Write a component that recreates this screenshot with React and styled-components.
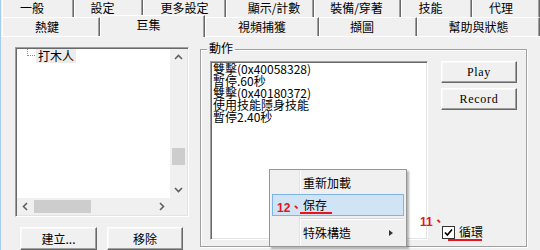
import React from "react";
import styled, { createGlobalStyle } from "styled-components";

const GlobalStyle = createGlobalStyle`
	html, body {
		margin: 0;
		padding: 0;
		background: #f0f0f0;
	}
	body {
		width: 540px;
		height: 250px;
		overflow: hidden;
		font-family: "Noto Sans CJK TC", "Noto Sans CJK SC", sans-serif;
		color: #000;
	}
`;

const tabsTop = [
	{ label: "一般", w: 72, nudge: -6 },
	{ label: "設定", w: 69, nudge: -6 },
	{ label: "更多設定", w: 83, nudge: 0 },
	{ label: "顯示/計數", w: 88, nudge: 4 },
	{ label: "裝備/穿著", w: 87, nudge: -1 },
	{ label: "技能", w: 71, nudge: -6 },
	{ label: "代理", w: 68, nudge: -5 },
];

const tabsBottom = [
	{ label: "熱鍵", w: 98, nudge: -4 },
	{ label: "巨集", w: 105, nudge: -4, active: true },
	{ label: "視頻捕獲", w: 114, nudge: 0 },
	{ label: "擷圖", w: 98, nudge: -6 },
	{ label: "幫助與狀態", w: 123, nudge: 0 },
];

const actions = [
	"雙擊(0x40058328)",
	"暫停.60秒",
	"雙擊(0x40180372)",
	"使用技能隱身技能",
	"暫停2.40秒",
];

function Chevron({ dir }) {
	const paths = {
		up: "M5 10 L8.5 6.5 L12 10",
		down: "M5 7 L8.5 10.5 L12 7",
		left: "M10 5 L6.5 8.5 L10 12",
		right: "M7 5 L10.5 8.5 L7 12",
	};
	return (
		<svg width="17" height="17" viewBox="0 0 17 17">
			<path d={paths[dir]} fill="none" stroke="#606060" strokeWidth="1.6" />
		</svg>
	);
}

function App() {
	return (
		<>
			<GlobalStyle />
			<Window>
				<TabRow $h={17}>
					{tabsTop.map((t) => (
						<Tab key={t.label} $w={t.w} $nudge={t.nudge}>
							{t.label}
						</Tab>
					))}
				</TabRow>
				<TabRow $h={19}>
					{tabsBottom.map((t) => (
						<Tab key={t.label} $w={t.w} $nudge={t.nudge} $active={t.active}>
							{t.label}
						</Tab>
					))}
				</TabRow>
				<Panel>
					<LeftCol>
						<TreeBox>
							<TreeView>
								<TreeItem>
									<Branch />
									<TreeLabel>打木人</TreeLabel>
								</TreeItem>
							</TreeView>
							<VScroll>
								<Chevron dir="up" />
								<VTrack>
									<VThumb $offset={82} />
								</VTrack>
								<Chevron dir="down" />
							</VScroll>
							<HScroll>
								<Chevron dir="left" />
								<HTrack>
									<HThumb $offset={0} $size={57} />
								</HTrack>
								<Chevron dir="right" />
							</HScroll>
							<Corner />
						</TreeBox>
						<ButtonRow>
							<Button $w={77}>建立...</Button>
							<Button $w={76}>移除</Button>
						</ButtonRow>
					</LeftCol>
					<GroupBox>
						<GroupLabel>動作</GroupLabel>
						<ActionList>
							{actions.map((a) => (
								<ActionLine key={a}>{a}</ActionLine>
							))}
						</ActionList>
						<SideCol>
							<Button $w={76} $h={22} $latin>
								Play
							</Button>
							<Button $w={76} $h={22} $latin>
								Record
							</Button>
							<CheckRow>
								<FloatMark>11、</FloatMark>
								<CheckBox>
									<svg width="9" height="9" viewBox="0 0 9 9">
										<path d="M1 4.5 L3.4 7 L8 1.5" fill="none" stroke="#000" strokeWidth="1.7" />
									</svg>
								</CheckBox>
								<CheckLabel>循環</CheckLabel>
							</CheckRow>
						</SideCol>
					</GroupBox>
				</Panel>
				<Menu>
					<MenuItem>
						<Gutter />
						<ItemLabel>重新加載</ItemLabel>
					</MenuItem>
					<MenuItem $hover>
						<Gutter>
							<Mark>12、</Mark>
						</Gutter>
						<ItemLabel $underline>保存</ItemLabel>
					</MenuItem>
					<MenuSeparator />
					<MenuItem>
						<Gutter />
						<ItemLabel>特殊構造</ItemLabel>
						<SubArrow />
					</MenuItem>
				</Menu>
			</Window>
		</>
	);
}

const Window = styled.div`
	position: relative;
	width: 540px;
	height: 250px;
	box-sizing: border-box;
	border-left: 1px solid #a6cdee;
	background: #f0f0f0;
	overflow: hidden;
	display: flex;
	flex-direction: column;
`;

const TabRow = styled.div`
	display: flex;
	align-items: flex-end;
	height: ${(p) => p.$h}px;
	padding-left: 1px;
`;

const Tab = styled.div`
	box-sizing: border-box;
	flex: none;
	width: ${(p) => p.$w}px;
	height: ${(p) => (p.$active ? 22 : 19)}px;
	margin-bottom: ${(p) => (p.$active ? -1 : 0)}px;
	display: flex;
	align-items: center;
	justify-content: center;
	padding-left: ${(p) => Math.max(0, p.$nudge * 2)}px;
	padding-right: ${(p) => Math.max(0, -p.$nudge * 2)}px;
	padding-bottom: ${(p) => (p.$active ? 3 : 0)}px;
	border-top: 1px solid #fff;
	border-left: 1px solid #fff;
	border-right: 1px solid #696969;
	box-shadow: inset -1px 0 #a0a0a0;
	background: #f0f0f0;
	position: relative;
	z-index: ${(p) => (p.$active ? 2 : 1)};
	font-size: 12px;
	line-height: 14px;
	white-space: nowrap;
`;

const Panel = styled.div`
	flex: 1;
	display: flex;
	align-items: flex-start;
	gap: 11px;
	border-top: 1px solid #fff;
	padding: 10px 0 0 14px;
`;

const LeftCol = styled.div`
	width: 174px;
	display: flex;
	flex-direction: column;
	gap: 10px;
`;

const sunken = `
	border: 1px solid;
	border-color: #a0a0a0 #fff #fff #a0a0a0;
	box-shadow: inset 1px 1px #696969, inset -1px -1px #e3e3e3;
	background: #fff;
`;

const TreeBox = styled.div`
	box-sizing: border-box;
	width: 174px;
	height: 170px;
	${sunken}
	padding: 1px;
	display: grid;
	grid-template-columns: 1fr 17px;
	grid-template-rows: 1fr 17px;
`;

const TreeView = styled.div`
	background: #fff;
`;

const TreeItem = styled.div`
	display: flex;
	align-items: flex-start;
	height: 16px;
	padding-left: 10px;
`;

const Branch = styled.span`
	width: 8px;
	height: 7px;
	border-left: 1px dotted #8a8a8a;
	border-bottom: 1px dotted #8a8a8a;
	box-sizing: border-box;
`;

const TreeLabel = styled.span`
	margin-left: 1px;
	padding: 0 2px;
	background: #ececec;
	font-size: 12px;
	line-height: 14px;
	height: 14px;
`;

const VScroll = styled.div`
	display: grid;
	grid-template-rows: 17px 1fr 17px;
	background: #f0f0f0;
`;

const VTrack = styled.div`
	display: flex;
	flex-direction: column;
`;

const VThumb = styled.div`
	margin: ${(p) => p.$offset}px 2px 0 2px;
	height: 17px;
	background: #cdcdcd;
`;

const HScroll = styled.div`
	display: grid;
	grid-template-columns: 17px 1fr 17px;
	background: #f0f0f0;
`;

const HTrack = styled.div`
	display: flex;
`;

const HThumb = styled.div`
	margin: 2px 0 2px ${(p) => p.$offset}px;
	width: ${(p) => p.$size}px;
	background: #cdcdcd;
`;

const Corner = styled.div`
	background: #f0f0f0;
`;

const ButtonRow = styled.div`
	display: flex;
	gap: 10px;
	padding-left: 5px;
`;

const Button = styled.div`
	box-sizing: border-box;
	width: ${(p) => p.$w}px;
	height: ${(p) => p.$h || 23}px;
	flex: none;
	display: flex;
	align-items: center;
	justify-content: center;
	background: #f0f0f0;
	border: 1px solid;
	border-color: #fff #696969 #696969 #fff;
	box-shadow: inset -1px -1px #a0a0a0, inset 1px 1px #f8f8f8;
	font-family: ${(p) =>
		p.$latin ? `"Liberation Serif", serif` : `"Noto Sans CJK TC", sans-serif`};
	font-size: 12px;
	letter-spacing: ${(p) => (p.$latin ? 0.7 : 0)}px;
	line-height: 14px;
`;

const GroupBox = styled.div`
	position: relative;
	box-sizing: border-box;
	margin-top: 2px;
	width: 327px;
	height: 198px;
	border: 1px solid #a0a0a0;
	box-shadow: inset 1px 1px #fff, 1px 1px #fff;
	display: flex;
	gap: 13px;
	padding: 11px 9px 6px 9px;
`;

const GroupLabel = styled.span`
	position: absolute;
	left: 6px;
	top: -9px;
	padding: 0 2px;
	background: #f0f0f0;
	font-size: 12px;
	line-height: 14px;
`;

const ActionList = styled.div`
	box-sizing: border-box;
	width: 218px;
	height: 179px;
	${sunken}
	padding: 1px 2px;
`;

const ActionLine = styled.div`
	font-size: 12px;
	line-height: 12px;
	height: 12px;
	white-space: nowrap;
`;

const SideCol = styled.div`
	width: 76px;
	display: flex;
	flex-direction: column;
	gap: 5px;
`;

const CheckRow = styled.div`
	position: relative;
	margin-top: auto;
	height: 16px;
	display: flex;
	align-items: center;
	gap: 4px;
	padding-left: 1px;
`;

const CheckBox = styled.span`
	box-sizing: border-box;
	width: 13px;
	height: 13px;
	border: 1px solid #333;
	background: #fff;
	display: flex;
	align-items: center;
	justify-content: center;
`;

const CheckLabel = styled.span`
	position: relative;
	font-size: 12px;
	line-height: 14px;
	&::after {
		content: "";
		position: absolute;
		left: -11px;
		right: 1px;
		bottom: -2px;
		height: 2px;
		background: #e8141c;
	}
`;

const Mark = styled.span`
	color: #e8141c;
	font-family: "Liberation Sans", "Noto Sans CJK TC", sans-serif;
	font-weight: bold;
	font-size: 12px;
	line-height: 14px;
	white-space: nowrap;
`;

const FloatMark = styled(Mark)`
	position: absolute;
	left: -21px;
	top: -9px;
`;

const Menu = styled.div`
	position: absolute;
	left: 268px;
	top: 169px;
	width: 138px;
	box-sizing: border-box;
	padding: 2px;
	border: 1px solid #979797;
	background: linear-gradient(
			to right,
			transparent 29px,
			#e2e3e3 29px,
			#e2e3e3 30px,
			#fff 30px,
			#fff 31px,
			transparent 31px
		)
		#f0f0f0;
	box-shadow: 2px 2px 2px rgba(0, 0, 0, 0.3);
	z-index: 5;
`;

const MenuItem = styled.div`
	box-sizing: border-box;
	height: 22px;
	display: flex;
	align-items: center;
	border: 1px solid ${(p) => (p.$hover ? "#7fb4e8" : "transparent")};
	background: ${(p) => (p.$hover ? "#d1e4f6" : "transparent")};
`;

const Gutter = styled.span`
	width: 30px;
	flex: none;
	padding-left: 4px;
	box-sizing: border-box;
`;

const ItemLabel = styled.span`
	position: relative;
	flex: 1;
	font-size: 12px;
	line-height: 14px;
	&::after {
		content: "";
		display: ${(p) => (p.$underline ? "block" : "none")};
		position: absolute;
		left: -3px;
		width: 32px;
		bottom: -2px;
		height: 2px;
		background: #e8141c;
	}
`;

const SubArrow = styled.span`
	width: 0;
	height: 0;
	margin-right: 10px;
	border-left: 4px solid #333;
	border-top: 3.5px solid transparent;
	border-bottom: 3.5px solid transparent;
`;

const MenuSeparator = styled.div`
	height: 6px;
	margin-left: 28px;
	background: linear-gradient(
		to bottom,
		transparent 2px,
		#d7d7d7 2px,
		#d7d7d7 3px,
		#fff 3px,
		#fff 4px,
		transparent 4px
	);
`;

export default App;
